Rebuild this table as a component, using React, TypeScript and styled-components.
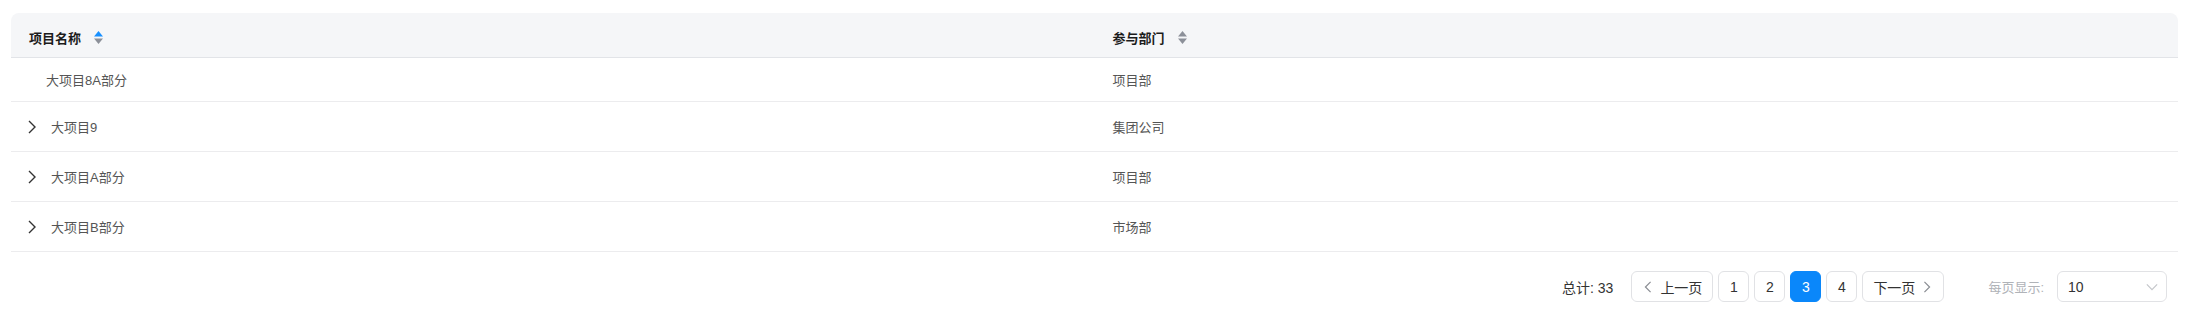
import { FC } from "react";
import styled, { createGlobalStyle } from "styled-components";

const GlobalStyle = createGlobalStyle`
  body {
    margin: 0;
    background: #fff;
    font-family: "Liberation Sans", "Noto Sans CJK SC", sans-serif;
  }
`;

type Row = { name: string; dept: string; expandable: boolean };

const rows: Row[] = [
  { name: "大项目8A部分", dept: "项目部", expandable: false },
  { name: "大项目9", dept: "集团公司", expandable: true },
  { name: "大项目A部分", dept: "项目部", expandable: true },
  { name: "大项目B部分", dept: "市场部", expandable: true },
];

const Page = styled.div`
  padding: 13px 16px 0 11px;
`;

const Table = styled.div`
  width: 100%;
`;

const HeaderRow = styled.div`
  display: grid;
  grid-template-columns: 1fr 1fr;
  height: 45px;
  background: #f5f6f8;
  border-radius: 8px 8px 0 0;
  border-bottom: 1px solid #e2e4e8;
  box-sizing: border-box;
`;

const HeaderCell = styled.div`
  display: flex;
  align-items: center;
  padding: 4px 0 0 18px;
  font-size: 13px;
  font-weight: 700;
  color: #1b1b1b;
  gap: 13px;
`;

const SortIcon: FC<{ active?: boolean }> = ({ active }) => (
  <svg width="9" height="13" viewBox="0 0 9 13">
    <path d="M4.5 0 L9 5.5 H0 Z" fill={active ? "#1890ff" : "#8c9099"} />
    <path d="M0 7.5 H9 L4.5 13 Z" fill="#8c9099" />
  </svg>
);

const BodyRow = styled.div<{ $h: number }>`
  display: grid;
  grid-template-columns: 1fr 1fr;
  height: ${(p) => p.$h}px;
  border-bottom: 1px solid #ececee;
  box-sizing: border-box;
`;

const Cell = styled.div<{ $indent?: number }>`
  display: flex;
  align-items: center;
  padding-left: ${(p) => p.$indent ?? 18}px;
  font-size: 13px;
  color: #555;
`;

const Expander = styled.span`
  display: inline-flex;
  width: 26px;
  align-items: center;
`;

const Chevron: FC<{ dir: "right" | "left" | "down"; size?: number; color?: string }> = ({
  dir,
  size = 14,
  color = "#333",
}) => {
  const d =
    dir === "right"
      ? "M4 1 L10 7 L4 13"
      : dir === "left"
      ? "M10 1 L4 7 L10 13"
      : "M1 4 L7 10 L13 4";
  return (
    <svg width={size} height={size} viewBox="0 0 14 14">
      <path d={d} fill="none" stroke={color} strokeWidth="1.4" />
    </svg>
  );
};

const Footer = styled.div`
  display: flex;
  justify-content: flex-end;
  align-items: center;
  margin-top: 19px;
  padding-right: 11px;
  font-size: 14px;
  color: #333;
`;

const Total = styled.span`
  margin-right: 18px;
`;

const PageButton = styled.button<{ $active?: boolean; $wide?: boolean }>`
  height: 31px;
  min-width: ${(p) => (p.$wide ? 81 : 31)}px;
  margin-right: 5px;
  padding: 0 ${(p) => (p.$wide ? 10 : 0)}px;
  border: 1px solid ${(p) => (p.$active ? "#0a87fa" : "#e1e2e5")};
  border-radius: 6px;
  background: ${(p) => (p.$active ? "#0a87fa" : "#fff")};
  color: ${(p) => (p.$active ? "#fff" : "#333")};
  font-family: inherit;
  font-size: 14px;
  display: inline-flex;
  align-items: center;
  justify-content: center;
  gap: 6px;
  box-sizing: border-box;
  cursor: pointer;
`;

const SizeLabel = styled.span`
  margin-left: 39px;
  margin-right: 13px;
  color: #b0b3b8;
  font-size: 13px;
`;

const Select = styled.div`
  width: 110px;
  height: 31px;
  box-sizing: border-box;
  border: 1px solid #e1e2e5;
  border-radius: 6px;
  display: flex;
  align-items: center;
  justify-content: space-between;
  padding: 0 8px 0 10px;
  font-size: 14px;
  color: #333;
`;

export default function App() {
  return (
    <Page>
      <GlobalStyle />
      <Table>
        <HeaderRow>
          <HeaderCell>
            项目名称
            <SortIcon active />
          </HeaderCell>
          <HeaderCell>
            参与部门
            <SortIcon />
          </HeaderCell>
        </HeaderRow>
        {rows.map((r, i) => (
          <BodyRow key={i} $h={i === 0 ? 44 : 50}>
            <Cell $indent={r.expandable ? 14 : 35}>
              {r.expandable && (
                <Expander>
                  <Chevron dir="right" />
                </Expander>
              )}
              {r.name}
            </Cell>
            <Cell>{r.dept}</Cell>
          </BodyRow>
        ))}
      </Table>
      <Footer>
        <Total>总计: 33</Total>
        <PageButton $wide>
          <Chevron dir="left" size={12} color="#8a8d93" />
          上一页
        </PageButton>
        {[1, 2, 3, 4].map((n) => (
          <PageButton key={n} $active={n === 3}>
            {n}
          </PageButton>
        ))}
        <PageButton $wide>
          下一页
          <Chevron dir="right" size={12} color="#8a8d93" />
        </PageButton>
        <SizeLabel>每页显示:</SizeLabel>
        <Select>
          10
          <Chevron dir="down" size={12} color="#c4c6ca" />
        </Select>
      </Footer>
    </Page>
  );
}
